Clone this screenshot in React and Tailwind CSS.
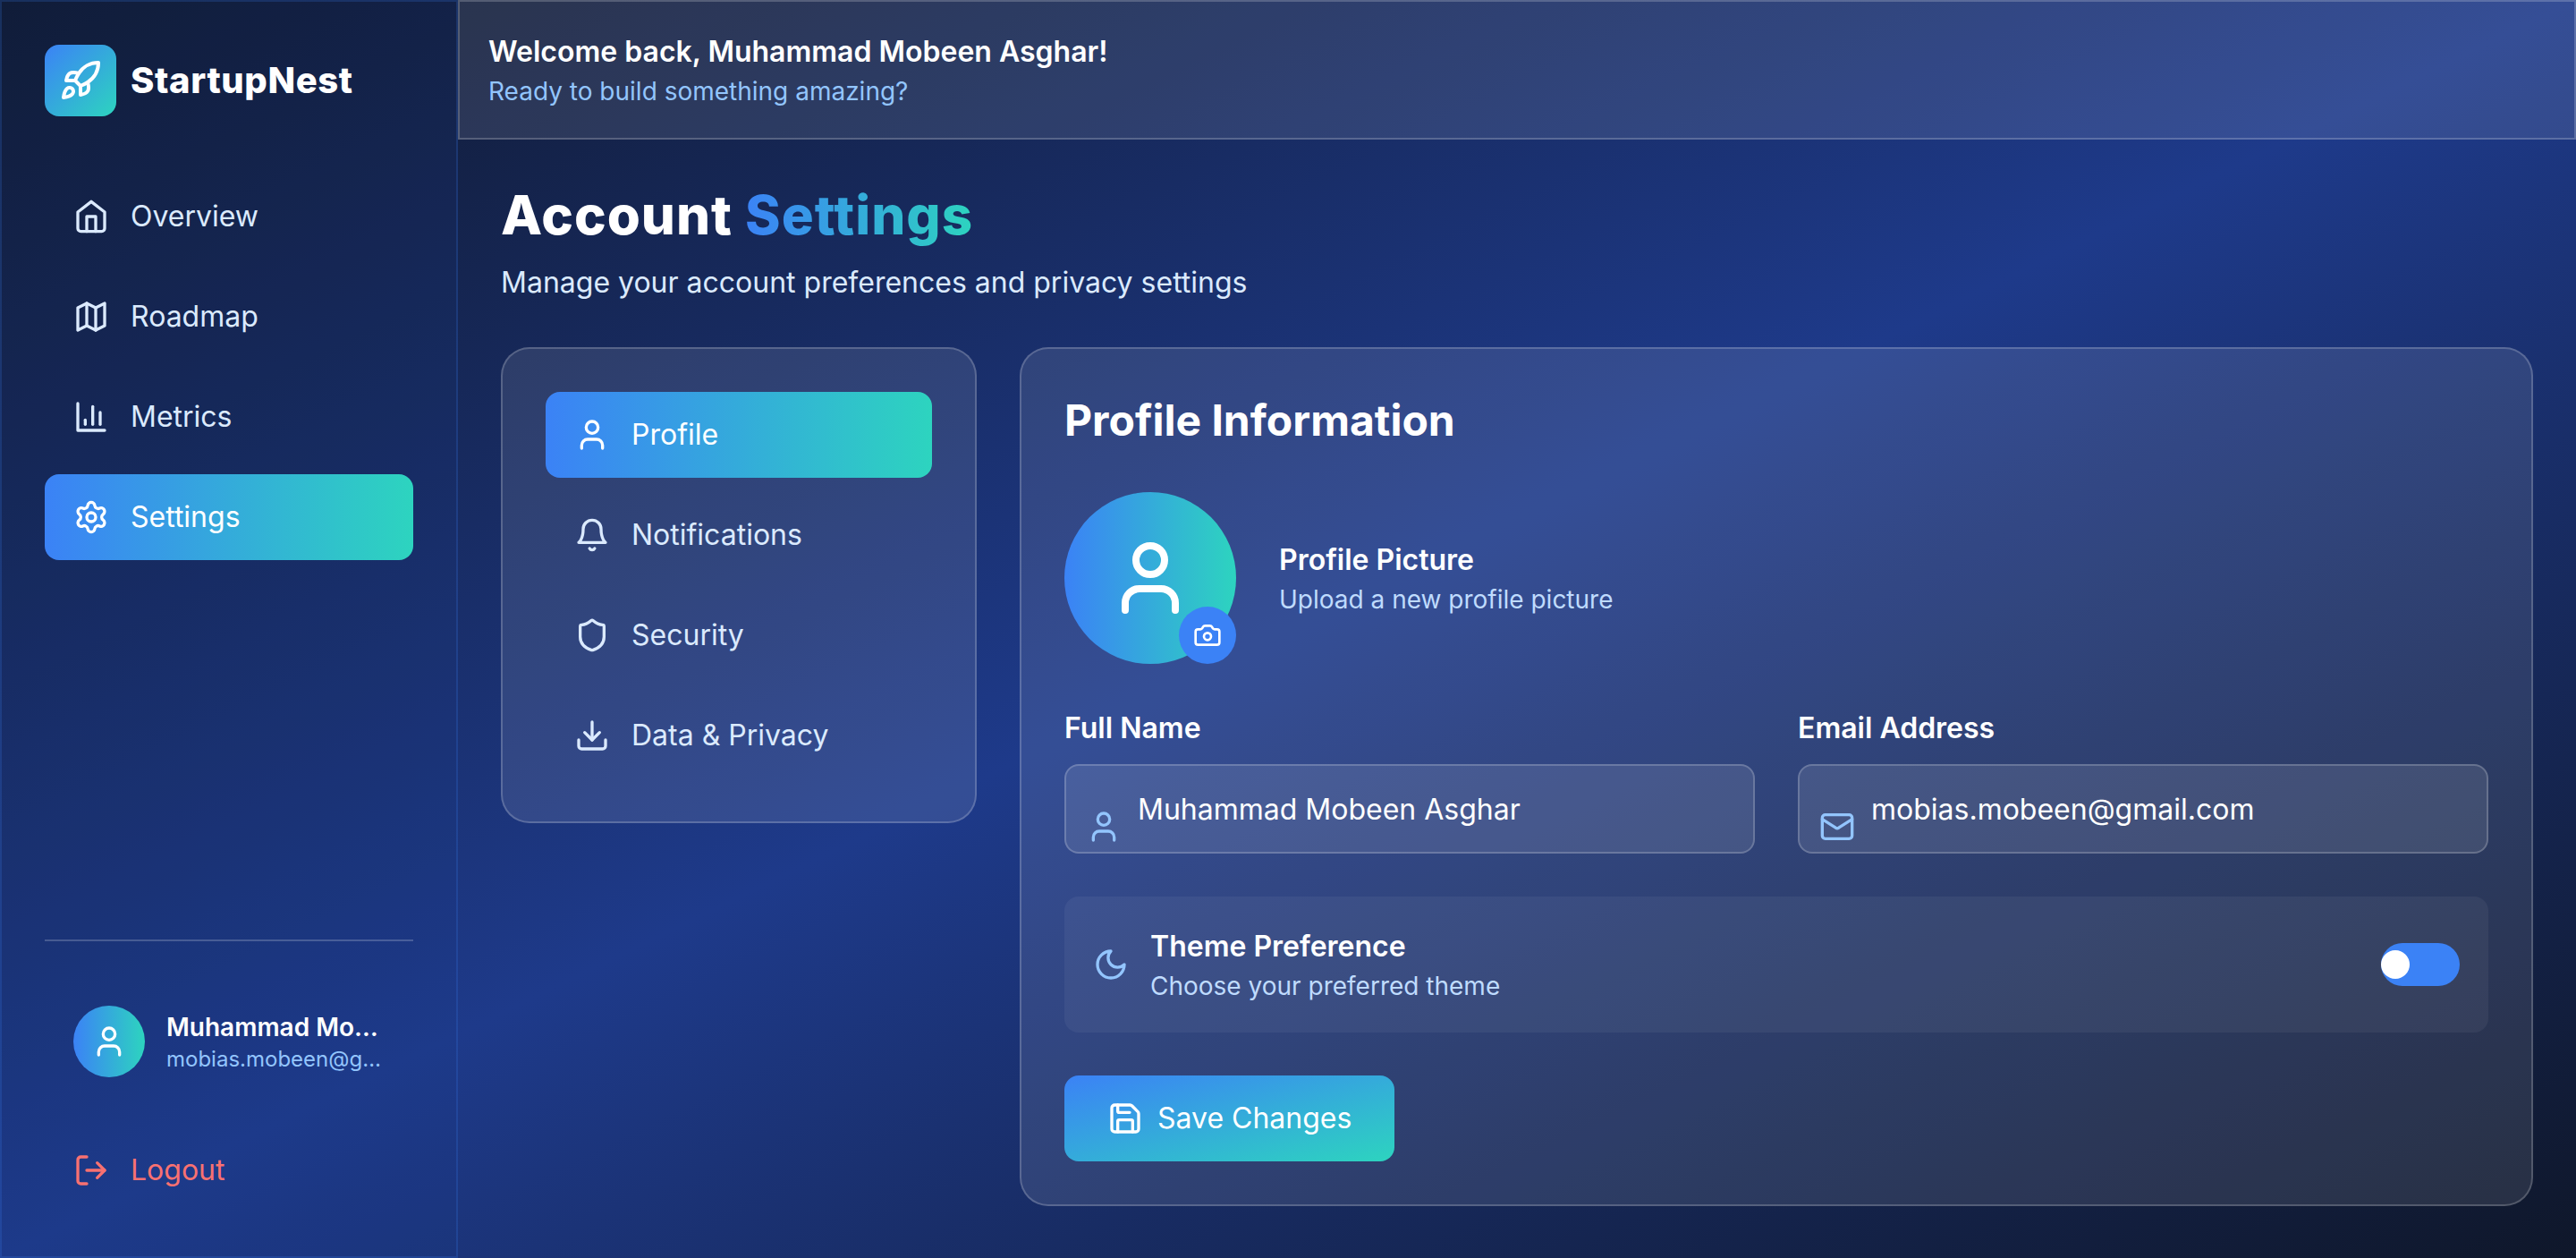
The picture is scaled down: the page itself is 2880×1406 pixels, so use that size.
import { Rocket, Settings, Shield, Download, Mail, Camera, Save, LogOut, User } from 'lucide-react'

// older lucide shapes that the current package has redrawn
function HomeIcon({ className }) {
  return (
    <svg className={className} viewBox="0 0 24 24" fill="none" stroke="currentColor" strokeWidth="2" strokeLinecap="round" strokeLinejoin="round">
      <path d="m3 9 9-7 9 7v11a2 2 0 0 1-2 2H5a2 2 0 0 1-2-2z" />
      <polyline points="9 22 9 12 15 12 15 22" />
    </svg>
  )
}

function MapIcon({ className }) {
  return (
    <svg className={className} viewBox="0 0 24 24" fill="none" stroke="currentColor" strokeWidth="2" strokeLinecap="round" strokeLinejoin="round">
      <polygon points="3 6 9 3 15 6 21 3 21 18 15 21 9 18 3 21" />
      <line x1="9" x2="9" y1="3" y2="18" />
      <line x1="15" x2="15" y1="6" y2="21" />
    </svg>
  )
}

function ChartIcon({ className }) {
  return (
    <svg className={className} viewBox="0 0 24 24" fill="none" stroke="currentColor" strokeWidth="2" strokeLinecap="round" strokeLinejoin="round">
      <path d="M3 3v18h18" />
      <path d="M18 17V9" />
      <path d="M13 17V5" />
      <path d="M8 17v-3" />
    </svg>
  )
}

function BellIcon({ className }) {
  return (
    <svg className={className} viewBox="0 0 24 24" fill="none" stroke="currentColor" strokeWidth="2" strokeLinecap="round" strokeLinejoin="round">
      <path d="M6 8a6 6 0 0 1 12 0c0 7 3 9 3 9H3s3-2 3-9" />
      <path d="M10.3 21a1.94 1.94 0 0 0 3.4 0" />
    </svg>
  )
}

function MoonIcon({ className }) {
  return (
    <svg className={className} viewBox="0 0 24 24" fill="none" stroke="currentColor" strokeWidth="2" strokeLinecap="round" strokeLinejoin="round">
      <path d="M12 3a6 6 0 0 0 9 9 9 9 0 1 1-9-9Z" />
    </svg>
  )
}

const NAV_LINKS = [
  { label: 'Overview', icon: HomeIcon },
  { label: 'Roadmap', icon: MapIcon },
  { label: 'Metrics', icon: ChartIcon },
  { label: 'Settings', icon: Settings, active: true },
]

const SETTINGS_LINKS = [
  { label: 'Profile', icon: User, active: true },
  { label: 'Notifications', icon: BellIcon },
  { label: 'Security', icon: Shield },
  { label: 'Data & Privacy', icon: Download },
]

function MenuItem({ item }) {
  const Icon = item.icon
  return (
    <button
      className={`flex h-[96px] w-full items-center gap-[24px] rounded-2xl px-[32px] text-left text-[32px] leading-[48px] ${
        item.active ? 'bg-linear-to-r/srgb from-[#3b82f6] to-[#2dd4bf] text-white' : 'text-[#dbeafe]'
      }`}
    >
      <Icon className="h-[40px] w-[40px] shrink-0" />
      {item.label}
    </button>
  )
}

function Sidebar() {
  return (
    <aside className="flex h-screen w-[512px] shrink-0 flex-col border-2 border-[#3b82f6]/20 bg-[#1e3a8a]/15 p-[48px]">
      <div className="mb-[64px] flex items-center gap-[16px]">
        <div className="flex h-[80px] w-[80px] items-center justify-center rounded-2xl bg-linear-to-br/srgb from-[#3b82f6] to-[#2dd4bf] text-white">
          <Rocket className="h-[48px] w-[48px]" />
        </div>
        <span className="text-[40px] font-extrabold leading-[56px] tracking-[0.6px] text-white">StartupNest</span>
      </div>

      <nav className="flex flex-1 flex-col gap-[16px]">
        {NAV_LINKS.map((link) => (
          <MenuItem key={link.label} item={link} />
        ))}
      </nav>

      <div className="border-t-2 border-white/20 pt-[32px]">
        <div className="mb-[16px] flex items-center gap-[24px] px-[32px] py-[40px]">
          <div className="flex h-[80px] w-[80px] shrink-0 items-center justify-center rounded-full bg-linear-to-r/srgb from-[#3b82f6] to-[#2dd4bf] text-white">
            <User className="h-[40px] w-[40px]" />
          </div>
          <div className="min-w-0 flex-1">
            <p className="truncate text-[28px] font-semibold leading-[40px] text-white">Muhammad Mobeen Asghar</p>
            <p className="truncate text-[24px] leading-[32px] text-[#93c5fd]">mobias.mobeen@gmail.com</p>
          </div>
        </div>
        <button className="flex h-[96px] w-full items-center gap-[24px] px-[32px] text-[32px] leading-[48px] text-[#f87171]">
          <LogOut className="h-[40px] w-[40px]" />
          Logout
        </button>
      </div>
    </aside>
  )
}

function Field({ label, value, icon: Icon }) {
  return (
    <div>
      <label className="mb-[16px] block text-[32px] font-semibold leading-[48px] text-white">{label}</label>
      <div className="relative">
        <input
          readOnly
          value={value}
          className="h-[100px] w-full rounded-2xl border-2 border-white/20 bg-white/10 pl-[80px] pr-[32px] text-[32px] leading-[48px] text-white outline-none"
        />
        <Icon className="absolute left-[24px] top-1/2 h-[40px] w-[40px] text-[#93c5fd]" />
      </div>
    </div>
  )
}

function ProfileCard() {
  return (
    <section className="flex-1 rounded-[32px] border-2 border-white/20 bg-white/10 p-[48px]">
      <h2 className="mb-[48px] text-[48px] font-bold leading-[64px] text-white">Profile Information</h2>

      <div className="mb-[48px] flex items-center gap-[48px]">
        <div className="relative flex h-[192px] w-[192px] items-center justify-center rounded-full bg-linear-to-r/srgb from-[#3b82f6] to-[#2dd4bf] text-white">
          <User className="h-[96px] w-[96px]" />
          <div className="absolute bottom-0 right-0 flex h-[64px] w-[64px] items-center justify-center rounded-full bg-[#3b82f6]">
            <Camera className="h-[32px] w-[32px]" />
          </div>
        </div>
        <div>
          <h3 className="text-[32px] font-semibold leading-[48px] text-white">Profile Picture</h3>
          <p className="text-[28px] leading-[40px] text-[#bfdbfe]">Upload a new profile picture</p>
        </div>
      </div>

      <div className="mb-[48px] grid grid-cols-2 gap-[48px]">
        <Field label="Full Name" value="Muhammad Mobeen Asghar" icon={User} />
        <Field label="Email Address" value="mobias.mobeen@gmail.com" icon={Mail} />
      </div>

      <div className="mb-[48px] flex items-center justify-between rounded-2xl bg-white/5 p-[32px]">
        <div className="flex items-center gap-[24px]">
          <MoonIcon className="h-[40px] w-[40px] text-[#93c5fd]" />
          <div>
            <p className="text-[32px] font-semibold leading-[48px] text-white">Theme Preference</p>
            <p className="text-[28px] leading-[40px] text-[#bfdbfe]">Choose your preferred theme</p>
          </div>
        </div>
        <button className="relative h-[48px] w-[88px] rounded-full bg-[#3b82f6]">
          <span className="absolute left-0 top-[8px] h-[32px] w-[32px] rounded-full bg-white" />
        </button>
      </div>

      <button className="flex h-[96px] items-center gap-[16px] rounded-2xl bg-linear-to-br/srgb from-[#3b82f6] to-[#2dd4bf] px-[48px] text-[32px] leading-[48px] text-white">
        <Save className="h-[40px] w-[40px]" />
        Save Changes
      </button>
    </section>
  )
}

export default function App() {
  return (
    <div className="flex h-screen overflow-hidden bg-linear-to-br/srgb from-[#0f172a] via-[#1e3a8a] to-[#0f172a] font-[Inter,sans-serif]">
      <Sidebar />

      <div className="flex min-w-0 flex-1 flex-col">
        <header className="h-[156px] border-2 border-white/20 bg-white/10 px-[32px] py-[32px]">
          <h1 className="text-[32px] font-semibold leading-[48px] text-white">Welcome back, Muhammad Mobeen Asghar!</h1>
          <p className="text-[28px] leading-[40px] text-[#93c5fd]">Ready to build something amazing?</p>
        </header>

        <main className="p-[48px]">
          <h2 className="mb-[16px] text-[60px] font-extrabold leading-[72px] tracking-[1px] text-white">
            Account{' '}
            <span className="bg-linear-to-r/srgb from-[#3b82f6] to-[#2dd4bf] bg-clip-text text-transparent">Settings</span>
          </h2>
          <p className="mb-[48px] text-[32px] leading-[48px] text-[#dbeafe]">Manage your account preferences and privacy settings</p>

          <div className="flex items-start gap-[48px]">
            <div className="flex w-[532px] shrink-0 flex-col gap-[16px] rounded-[32px] border-2 border-white/20 bg-white/10 p-[48px]">
              {SETTINGS_LINKS.map((link) => (
                <MenuItem key={link.label} item={link} />
              ))}
            </div>
            <ProfileCard />
          </div>
        </main>
      </div>
    </div>
  )
}
